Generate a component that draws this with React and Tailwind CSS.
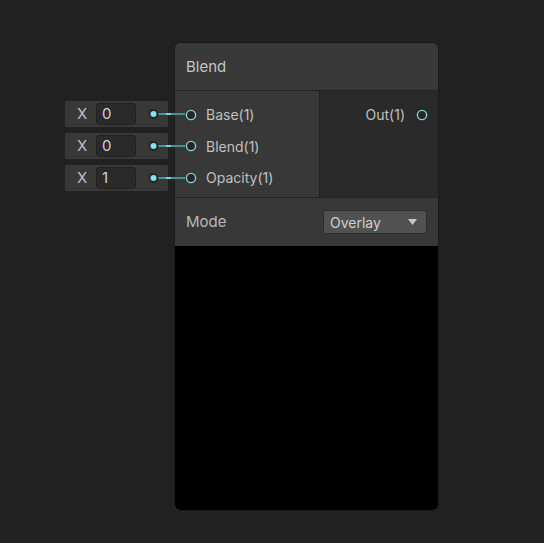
import React from "react";

const FONT = { fontFamily: "Inter, 'Noto Sans', 'Liberation Sans', sans-serif" };

const inputs = [
  { label: "Base(1)", value: "0" },
  { label: "Blend(1)", value: "0" },
  { label: "Opacity(1)", value: "1" },
];

function PortCircle({ className = "" }) {
  return (
    <svg width="12" height="12" viewBox="0 0 12 12" className={className}>
      <circle cx="6" cy="6" r="4.6" fill="#262626" stroke="#7fd3d7" strokeWidth="1.4" />
    </svg>
  );
}

function InputField({ value }) {
  return (
    <div className="flex h-[26px] w-[103px] items-center rounded-[2px] bg-[#383838]">
      <span className="w-[31px] pl-[12px] text-[15px] text-[#c0c0c0]">X</span>
      <div className="flex h-[22px] w-[40px] items-center rounded-[3px] border border-[#222] bg-[#2a2a2a] pl-[5px] text-[15px] text-[#d0d0d0]">
        {value}
      </div>
    </div>
  );
}

export default function App() {
  return (
    <div className="relative h-[543px] w-[544px] overflow-hidden bg-[#212121]" style={FONT}>
      {/* node */}
      <div className="absolute left-[174px] top-[42px] flex h-[469px] w-[265px] flex-col overflow-hidden rounded-[6px] border border-[#1b1b1b] bg-[#393939]">
        <div className="flex h-[48px] items-center border-b border-[#232323] pl-[11px] pt-[2px] text-[15px] text-[#c4c4c4]">
          Blend
        </div>
        <div className="flex h-[107px] border-b border-[#232323]">
          <div className="flex w-[145px] flex-col border-r border-[#232323] bg-[#383838] pt-[8px]">
            {inputs.map((r) => (
              <div key={r.label} className="flex h-[31.5px] items-center pl-[10px]">
                <PortCircle />
                <span className="ml-[9px] text-[14px] text-[#c0c0c0]">{r.label}</span>
              </div>
            ))}
          </div>
          <div className="flex flex-1 flex-col bg-[#2a2a2a] pt-[8px]">
            <div className="flex h-[31px] items-center justify-end pr-[10px]">
              <span className="text-[14px] text-[#c0c0c0]">Out(1)</span>
              <PortCircle className="ml-[11px]" />
            </div>
          </div>
        </div>
        <div className="flex h-[48px] items-center justify-between bg-[#383838] pl-[11px] pr-[11px]">
          <span className="text-[15px] text-[#b8b8b8]">Mode</span>
          <div className="flex h-[24px] w-[104px] items-center justify-between rounded-[3px] border border-[#2d2d2d] bg-[#515151] pl-[6px] pr-[9px] text-[14px] text-[#d0d0d0]">
            <span>Overlay</span>
            <svg width="9" height="6" viewBox="0 0 9 6">
              <path d="M0 0 H9 L4.5 6 Z" fill="#c8c8c8" />
            </svg>
          </div>
        </div>
        <div className="flex-1 rounded-b-[5px] bg-black" />
      </div>

      {/* default value fields wired to the input ports */}
      <div className="absolute left-[65px] top-[101px] flex flex-col gap-[6px]">
        {inputs.map((r) => (
          <div key={r.label} className="relative flex h-[26px] items-center">
            <InputField value={r.value} />
            <svg width="40" height="12" viewBox="0 0 40 12" className="absolute left-[82px] top-[7px]">
              <line x1="6" y1="6" x2="38" y2="6" stroke="#4e8f93" strokeWidth="2" />
              <rect x="19" y="5" width="5" height="2" fill="#7fd3d7" />
              <circle cx="6.5" cy="6" r="5" fill="#262626" />
              <circle cx="6.5" cy="6" r="3" fill="#84e2e6" />
            </svg>
          </div>
        ))}
      </div>
    </div>
  );
}
